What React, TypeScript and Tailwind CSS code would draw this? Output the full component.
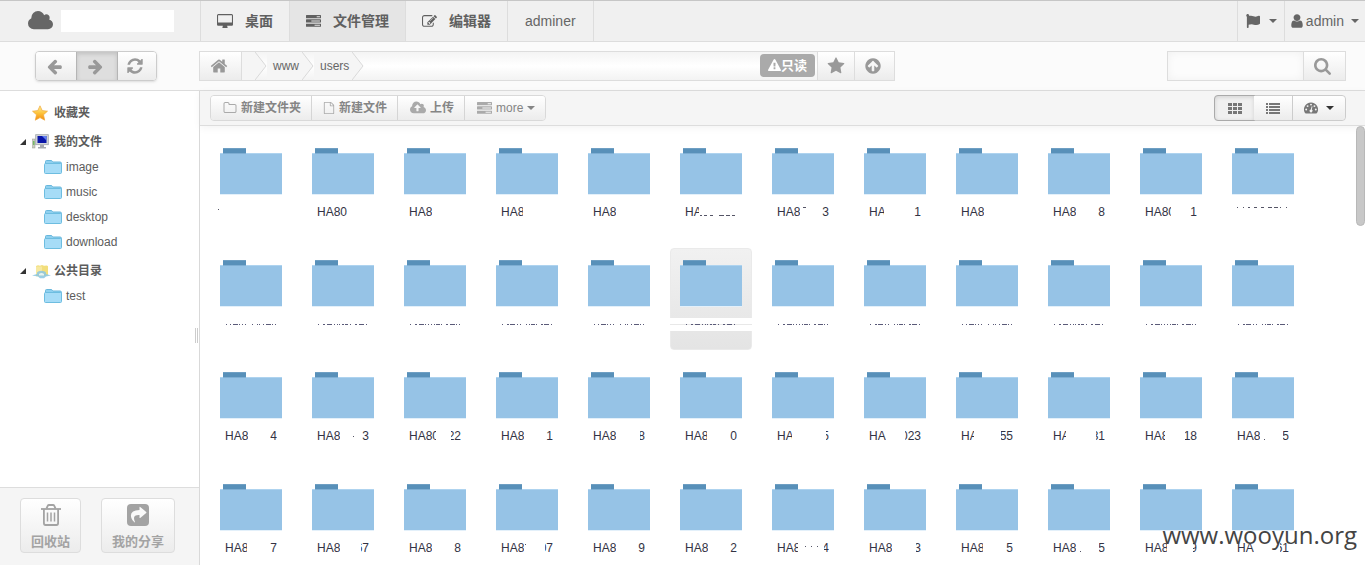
import React from "react";
import { FaFlag } from "react-icons/fa";

const ICONS = {
  left: "M1664 896v128q0 53-32.5 90.5t-84.5 37.5h-704l293 294q38 36 38 90t-38 90l-75 76q-37 37-90 37-52 0-91-37l-651-652q-37-37-37-90 0-52 37-91l651-650q38-38 91-38 52 0 90 38l75 74q38 38 38 91t-38 91l-293 293h704q52 0 84.5 37.5t32.5 90.5z",
  right: "M1600 960q0 54-37 91l-651 651q-39 37-91 37-51 0-90-37l-75-75q-38-38-38-91t38-91l293-293h-704q-52 0-84.5-37.5t-32.5-90.5v-128q0-53 32.5-90.5t84.5-37.5h704l-293-294q-38-36-38-90t38-90l75-75q38-38 90-38 53 0 91 38l651 651q37 35 37 90z",
  refresh: "M1639 1056q0 5-1 7-64 268-268 434.5t-478 166.5q-146 0-282.5-55t-243.5-157l-129 129q-19 19-45 19t-45-19-19-45v-448q0-26 19-45t45-19h448q26 0 45 19t19 45-19 45l-137 137q71 66 161 102t187 36q134 0 250-65t186-179q11-17 53-117 8-23 30-23h192q13 0 22.5 9.5t9.5 22.5zm25-800v448q0 26-19 45t-45 19h-448q-26 0-45-19t-19-45 19-45l138-138q-148-137-349-137-134 0-250 65t-186 179q-11 17-53 117-8 23-30 23h-199q-13 0-22.5-9.5t-9.5-22.5v-7q65-268 270-434.5t480-166.5q146 0 284 55.5t245 156.5l130-129q19-19 45-19t45 19 19 45z",
  home: "M1472 992v480q0 26-19 45t-45 19h-384v-384h-256v384h-384q-26 0-45-19t-19-45v-480q0-1 .5-3t.5-3l575-474 575 474q1 2 1 6zm223-69l-62 74q-8 9-21 11h-3q-13 0-21-7l-692-577-692 577q-12 8-24 7-13-2-21-11l-62-74q-8-10-7-23.5t11-21.5l719-599q32-26 76-26t76 26l244 204v-195q0-14 9-23t23-9h192q14 0 23 9t9 23v408l219 182q10 8 11 21.5t-7 23.5z",
  star: "M1728 647q0 22-26 48l-363 354 86 500q1 7 1 20 0 21-10.5 35.5t-30.5 14.5q-19 0-40-12l-449-236-449 236q-22 12-40 12-21 0-31.5-14.5t-10.5-35.5q0-6 2-20l86-500-364-354q-25-27-25-48 0-37 56-46l502-73 225-455q19-41 49-41t49 41l225 455 502 73q56 9 56 46z",
  search: "M1216 832q0-185-131.5-316.5t-316.5-131.5-316.5 131.5-131.5 316.5 131.5 316.5 316.5 131.5 316.5-131.5 131.5-316.5zm512 832q0 52-38 90t-90 38q-54 0-90-38l-343-342q-179 124-399 124-143 0-273.5-55.5t-225-150-150-225-55.5-273.5 55.5-273.5 150-225 225-150 273.5-55.5 273.5 55.5 225 150 150 225 55.5 273.5q0 220-124 399l343 343q37 37 37 90z",
  tasks: "M1024 1408h640v-128h-640v128zm-384-512h1024v-128h-1024v128zm640-512h384v-128h-384v128zm512 832v256q0 26-19 45t-45 19h-1664q-26 0-45-19t-19-45v-256q0-26 19-45t45-19h1664q26 0 45 19t19 45zm0-512v256q0 26-19 45t-45 19h-1664q-26 0-45-19t-19-45v-256q0-26 19-45t45-19h1664q26 0 45 19t19 45zm0-512v256q0 26-19 45t-45 19h-1664q-26 0-45-19t-19-45v-256q0-26 19-45t45-19h1664q26 0 45 19t19 45z",
  cloud: "M1984 1152q0 159-112.5 271.5t-271.5 112.5h-1088q-185 0-316.5-131.5t-131.5-316.5q0-132 71-241.5t187-163.5q-2-28-2-43 0-212 150-362t362-150q158 0 286.5 88t187.5 230q70-62 166-62 106 0 181 75t75 181q0 75-41 138 129 30 213 134.5t84 239.5z",
  upload: "M1280 864q0-14-9-23l-352-352q-9-9-23-9t-23 9l-351 351q-10 12-10 24 0 14 9 23t23 9h224v352q0 13 9.5 22.5t22.5 9.5h192q13 0 22.5-9.5t9.5-22.5v-352h224q13 0 22.5-9.5t9.5-22.5zm640 288q0 159-112.5 271.5t-271.5 112.5h-1088q-185 0-316.5-131.5t-131.5-316.5q0-130 70-240t188-165q-2-30-2-43 0-212 150-362t362-150q156 0 285.5 87t188.5 231q71-62 166-62 106 0 181 75t75 181q0 76-41 138 130 31 213.5 135.5t83.5 238.5z",
  user: "M1536 1399q0 109-62.5 187t-150.5 78h-854q-88 0-150.5-78t-62.5-187q0-85 8.5-160.5t31.5-152 58.5-131 94-89 134.5-34.5q131 128 313 128t313-128q76 0 134.5 34.5t94 89 58.5 131 31.5 152 8.5 160.5zm-256-887q0 159-112.5 271.5t-271.5 112.5-271.5-112.5-112.5-271.5 112.5-271.5 271.5-112.5 271.5 112.5 112.5 271.5z",
  edit: "M888 1184l116-116-152-152-116 116v56h96v96h56zm440-720q-16-16-33 1l-350 350q-17 17-1 33t33-1l350-350q17-17 1-33zm80 594v190q0 119-84.5 203.5t-203.5 84.5h-832q-119 0-203.5-84.5t-84.5-203.5v-832q0-119 84.5-203.5t203.5-84.5h832q63 0 117 25 15 7 18 23 3 17-9 29l-49 49q-14 14-32 8-23-6-45-6h-832q-66 0-113 47t-47 113v832q0 66 47 113t113 47h832q66 0 113-47t47-113v-126q0-13 9-22l64-64q15-15 35-7t20 29zm-96-738l288 288-672 672h-288v-288zm444 132l-92 92-288-288 92-92q28-28 68-28t68 28l152 152q28 28 28 68t-28 68z",
  up: "M1412 895q0-27-18-45l-362-362-91-91q-18-18-45-18t-45 18l-91 91-362 362q-18 18-18 45t18 45l91 91q18 18 45 18t45-18l189-189v502q0 26 19 45t45 19h128q26 0 45-19t19-45v-502l189 189q19 19 45 19t45-19l91-91q18-18 18-45zm252 1q0 209-103 385.5t-279.5 279.5-385.5 103-385.5-103-279.5-279.5-103-385.5 103-385.5 279.5-279.5 385.5-103 385.5 103 279.5 279.5 103 385.5z",
  folder: "M1600 1312v-704q0-40-28-68t-68-28h-704q-40 0-68-28t-28-68v-64q0-40-28-68t-68-28h-320q-40 0-68 28t-28 68v960q0 40 28 68t68 28h1216q40 0 68-28t28-68zm128-704v704q0 92-66 158t-158 66h-1216q-92 0-158-66t-66-158v-960q0-92 66-158t158-66h320q92 0 158 66t66 158v32h672q92 0 158 66t66 158z",
  file: "M1596 380q28 28 48 76t20 88v1152q0 40-28 68t-68 28h-1344q-40 0-68-28t-28-68v-1600q0-40 28-68t68-28h896q40 0 88 20t76 48zm-444-244v376h376q-10-29-22-41l-313-313q-12-12-41-22zm384 1528v-1024h-416q-40 0-68-28t-28-68v-416h-768v1536h1280z",
  desktop: "M1728 992v-832q0-13-9.5-22.5t-22.5-9.5h-1600q-13 0-22.5 9.5t-9.5 22.5v832q0 13 9.5 22.5t22.5 9.5h1600q13 0 22.5-9.5t9.5-22.5zm128-832v1088q0 66-47 113t-113 47h-544q0 37 16 77.5t32 71 16 43.5q0 26-19 45t-45 19h-512q-26 0-45-19t-19-45q0-14 16-44t32-70 16-78h-544q-66 0-113-47t-47-113v-1088q0-66 47-113t113-47h1600q66 0 113 47t47 113z",
  warning: "M1024 1375v-190q0-14-9.5-23.5t-22.5-9.5h-192q-13 0-22.5 9.5t-9.5 23.5v190q0 14 9.5 23.5t22.5 9.5h192q13 0 22.5-9.5t9.5-23.5zm-2-374l18-459q0-12-10-19-13-11-24-11h-220q-11 0-24 11-10 7-10 21l17 457q0 10 10 16.5t24 6.5h185q14 0 23.5-6.5t10.5-16.5zm-14-934l768 1408q35 63-2 126-17 29-46.5 46t-63.5 17h-1536q-34 0-63.5-17t-46.5-46q-37-63-2-126l768-1408q17-31 47-49t65-18 65 18 47 49z",
};

function Icon({ name, className, box = "0 0 1792 1792" }: { name: keyof typeof ICONS; className: string; box?: string }) {
  return (
    <svg viewBox={box} className={`shrink-0 ${className}`} fill="currentColor" aria-hidden="true">
      <path d={ICONS[name]} />
    </svg>
  );
}

const Caret = () => (
  <svg viewBox="0 0 8 4" className="h-1 w-2 shrink-0" fill="currentColor" aria-hidden="true">
    <path d="M0 0h8L4 4z" />
  </svg>
);

const BigFolder = () => (
  <svg viewBox="0 0 62 48" className="h-12 w-[62px]" aria-hidden="true">
    <rect x="3" y="0" width="23" height="6" fill="#5890b9" />
    <rect x="3" y="0" width="23" height="1" fill="#6f9fc3" />
    <rect x="0" y="5" width="62" height="41" fill="#96c3e6" />
    <rect x="0" y="5" width="62" height="1" fill="#aed3ef" />
    <rect x="3" y="5" width="23" height="1" fill="#7eaed3" />
    <rect x="0" y="46" width="62" height="1" fill="#e3f0fa" />
  </svg>
);

const SmallFolder = () => (
  <svg viewBox="0 0 18 14" className="h-3.5 w-[18px] shrink-0" aria-hidden="true">
    <path d="M1.5 5V1.500q0-1 1-1h4.500q1 0 1.500 1l.5.500h7q1.500 0 1.500 1.500v2" fill="#8fd0ef" stroke="#68b7dc" />
    <rect x=".5" y="3.500" width="17" height="10" rx="1" fill="#a6dcf7" stroke="#6dbde0" />
  </svg>
);

const StarIcon = () => (
  <svg viewBox="0 0 16 16" className="h-4 w-4 shrink-0" aria-hidden="true">
    <defs>
      <linearGradient id="gold" x2="0" y2="1">
        <stop offset="0" stopColor="#fff0a0" />
        <stop offset=".5" stopColor="#fdc43c" />
        <stop offset="1" stopColor="#f58a0c" />
      </linearGradient>
    </defs>
    <path d="M8 .8l2.200 4.800 5.300.6-4 3.600 1.200 5.400L8 12.600l-4.700 2.600 1.200-5.400-4-3.600 5.300-.6z" fill="url(#gold)" stroke="#efa83a" strokeWidth=".7" strokeLinejoin="round" />
  </svg>
);

const ComputerIcon = () => (
  <svg viewBox="0 0 17 16" className="h-4 w-[17px] shrink-0" aria-hidden="true">
    <rect x=".5" y="5" width="2.500" height="9" fill="#c9ccc0" stroke="#9a9d92" strokeWidth=".5" />
    <rect x="1.200" y="7" width="1.200" height="4" fill="#64b650" />
    <rect x="3.700" y=".7" width="12.600" height="10" fill="#d3d6db" stroke="#9fa3ab" strokeWidth=".8" />
    <rect x="5.500" y="2" width="9" height="7" fill="#0a16a8" />
    <path d="M10 2h4.500v4.500z" fill="#5f7df0" />
    <path d="M8 11h4v2h2v1.500H6V13h2z" fill="#a6a9af" />
  </svg>
);

const PublicIcon = () => (
  <svg viewBox="0 0 19 16" className="h-4 w-[19px] shrink-0" aria-hidden="true">
    <path d="M4 3l2-.8 2 .6 2-.8 2 .8 3-.3 1 .7v9l-3 1H4z" fill="#f2de7c" />
    <path d="M4 3.500h6v8H4z" fill="#f7e9a0" />
    <path d="M0 12.500l5-1.500V9.500q1-1.800 4.500-1.800T14 9.500V11l5 1.500-5 1-2 1.800H8l-2-1.800z" fill="#8ac5e3" opacity=".85" />
    <path d="M7 12.500V11q2.500-2 5 0v1.500z" fill="#e6f3ef" />
  </svg>
);

const GridIcon = () => (
  <svg viewBox="0 0 14 11" className="h-[11px] w-3.5" fill="currentColor" aria-hidden="true">
    {[0, 4, 8].flatMap((y) => [0, 5, 10].map((x) => <rect key={`${x}-${y}`} x={x} y={y} width="4" height="3" />))}
  </svg>
);

const ListIcon = () => (
  <svg viewBox="0 0 14 11" className="h-[11px] w-3.5" fill="currentColor" aria-hidden="true">
    {[0, 3, 6, 9].map((y) => (
      <g key={y}>
        <rect x="0" y={y} width="2" height="2" />
        <rect x="3" y={y} width="11" height="2" />
      </g>
    ))}
  </svg>
);

const GaugeIcon = () => (
  <svg viewBox="0 0 14 12" className="h-3 w-3.5" aria-hidden="true">
    <path d="M7 .5a7 7 0 0 1 6 10.600q-.3.400-.8.400H1.800q-.5 0-.8-.4A7 7 0 0 1 7 .5z" fill="currentColor" />
    <g fill="#f4f4f4">
      <circle cx="7" cy="2.600" r=".95" />
      <circle cx="3.600" cy="4.100" r=".95" />
      <circle cx="10.400" cy="4.100" r=".95" />
      <circle cx="2.200" cy="7.500" r=".95" />
      <circle cx="11.800" cy="7.500" r=".95" />
      <path d="M7.700 4.200l.8.200-.7 3.200a1.500 1.500 0 1 1-1-.2z" />
    </g>
  </svg>
);

const TrashIcon = () => (
  <svg viewBox="0 0 20 22" className="h-[22px] w-5" fill="none" stroke="currentColor" aria-hidden="true">
    <path d="M0 5h20" strokeWidth="1.800" />
    <path d="M5.500 4.500l1.200-2.600q.4-.9 1.300-.9h4q.9 0 1.300.9l1.200 2.600M2.900 5v14q0 2 1.600 2h11q1.600 0 1.600-2V5" strokeWidth="1.800" />
    <path d="M6.500 8.500v9M10 8.500v9M13.500 8.500v9" strokeWidth="1.500" />
  </svg>
);

const ShareIcon = () => (
  <svg viewBox="0 0 22 22" className="h-[22px] w-[22px]" aria-hidden="true">
    <rect width="22" height="22" rx="4" fill="currentColor" />
    <path d="M12.500 3.200q0-.8.7-.3l6 5q.5.500 0 1l-6 5q-.7.500-.7-.3v-2.700q-5.500-.2-5.500 3 0 1.800 1 4 .1.800-.5.300-3.600-3-3.600-6.700 0-5.500 8.600-5.600z" fill="#fafafa" />
  </svg>
);

type Mark = { x: number; y: number; w: number };
type Folder = { l?: string; lw?: number; r?: string; rw?: number; marks?: Mark[]; slit?: string; selected?: boolean };

const slits = [
  "1 3 1 2 5 1 1 2 1 2 1 6 1 4 1 1",
  "1 4 2 2 5 2 1 2 1 1 1 2 2 1 3 2",
  "1 4 2 2 5 1 1 2 1 2 1 2 1 1 4 1",
  "1 4 2 1 5 2 1 2 1 5 1 2 1 1 4 1",
];

const folders: Folder[] = [
  { marks: [{ x: -7, y: 5, w: 1 }] },
  { l: "HA80", lw: 31 }, { l: "HA8" }, { l: "HA8", lw: 22 }, { l: "HA8" },
  { l: "HA", lw: 14, marks: [{ x: 15, y: 11, w: 2 }, { x: 19, y: 11, w: 3 }, { x: 25, y: 11, w: 3 }, { x: 34, y: 11, w: 5 }, { x: 41, y: 11, w: 4 }, { x: 47, y: 11, w: 3 }] },
  { l: "HA8", r: "3", marks: [{ x: 26, y: 3, w: 3 }] },
  { l: "HA", lw: 15, r: "1" }, { l: "HA8" }, { l: "HA8", r: "8" }, { l: "HA80", lw: 26, r: "1" },
  { marks: [{ x: 0, y: 3, w: 1 }, { x: 6, y: 3, w: 1 }, { x: 11, y: 3, w: 2 }, { x: 17, y: 3, w: 3 }, { x: 24, y: 3, w: 3 }, { x: 31, y: 3, w: 4 }, { x: 37, y: 3, w: 4 }, { x: 43, y: 3, w: 1 }, { x: 49, y: 3, w: 1 }] },
  ...Array.from({ length: 12 }, (_, i) => ({ slit: slits[i % 4], selected: i === 5 })),
  { l: "HA8", r: "4" }, { l: "HA8", r: "3", marks: [{ x: 36, y: 8, w: 1 }] }, { l: "HA80", lw: 27, r: "22", rw: 10 },
  { l: "HA8", r: "1" }, { l: "HA8", r: "8", rw: 5 }, { l: "HA8", lw: 22, r: "0" }, { l: "HA", lw: 15, r: "5", rw: 3 },
  { l: "HA", r: "023", rw: 16 }, { l: "HA", lw: 13, r: "55", rw: 12 }, { l: "HA", lw: 13, r: "31", rw: 9 },
  { l: "HA8", lw: 20, r: "18", rw: 12 }, { l: "HA8", r: "5", rw: 6, marks: [{ x: 27, y: 11, w: 1 }] },
  { l: "HA8", lw: 22, r: "7" }, { l: "HA8", r: "67", rw: 8 }, { l: "HA8", r: "8" },
  { l: "HA8", r: "07", rw: 8, marks: [{ x: 24, y: 4, w: 1 }] }, { l: "HA8", r: "9" }, { l: "HA8", lw: 23, r: "2" },
  { l: "HA8", lw: 21, r: "4", rw: 5, marks: [{ x: 28, y: 6, w: 1 }, { x: 34, y: 6, w: 1 }, { x: 40, y: 6, w: 1 }] },
  { l: "HA8", r: "3", rw: 5 }, { l: "HA8", lw: 22, r: "5" }, { l: "HA8", r: "5", rw: 6, marks: [{ x: 27, y: 11, w: 1 }] },
  { l: "HA8", lw: 22, r: "9", rw: 4 }, { l: "HA", r: "61", rw: 9 },
];

function FolderCell({ f }: { f: Folder }) {
  return (
    <li className={`flex h-[102px] w-[82px] flex-col items-center rounded-sm pt-3 ${f.selected ? "border border-[#eaeaea] bg-linear-to-b from-[#f1f1f1] to-[#e4e4e4] pt-[11px]" : ""}`}>
      <BigFolder />
      {f.slit ? (
        <div className={`mt-2.5 flex h-[13px] items-center justify-center self-stretch bg-white ${f.selected ? "-mx-px" : ""}`}>
          <svg viewBox="0 0 82 1" className="h-px w-[82px]" aria-hidden="true">
            {f.selected && <rect width="82" height="1" fill="#e8e8e8" />}
            <path d="M16 .5h50" stroke="#5a5a78" strokeDasharray={f.slit} />
          </svg>
        </div>
      ) : (
        <div className="relative mt-2 flex h-4 w-[52px] justify-between text-xs leading-4 text-[#333344]">
          <span className="overflow-hidden" style={{ width: f.lw }}>{f.l}</span>
          <span className="flex justify-end overflow-hidden" style={{ width: f.rw }}>{f.r}</span>
          {f.marks && (
            <svg viewBox="0 0 52 16" className="absolute inset-0 h-4 w-[52px] overflow-visible" fill="#555566" aria-hidden="true">
              {f.marks.map((m) => <rect key={m.x} x={m.x} y={m.y} width={m.w} height="1" />)}
            </svg>
          )}
        </div>
      )}
    </li>
  );
}

function Crumb({ children, pad }: { children?: React.ReactNode; pad: string }) {
  return (
    <li className="flex items-stretch text-xs text-[#666]">
      {children ? <a href="#" className={`flex items-center bg-[#f5f5f5] ${pad}`}>{children}</a> : <span className={`bg-[#f5f5f5] ${pad}`} />}
      <svg viewBox="0 0 12 28" className="h-7 w-3" aria-hidden="true">
        <path d="M0 0L11 14L0 28" fill="#f5f5f5" stroke="#d9d9d9" />
      </svg>
    </li>
  );
}

function TreeGroup({ icon, label, items, open }: { icon: React.ReactNode; label: string; items: string[]; open?: boolean }) {
  return (
    <li className="mt-1">
      <a href="#" className="flex h-[25px] items-center pl-5 text-xs font-bold text-[#5c5c5c]">
        <span className="flex w-3 shrink-0">
          {open && (
            <svg viewBox="0 0 6 6" className="h-1.5 w-1.5" aria-hidden="true"><path d="M6 0v6H0z" fill="#333" /></svg>
          )}
        </span>
        <span className="flex w-[22px] shrink-0">{icon}</span>
        {label}
      </a>
      <ul>
        {items.map((t) => (
          <li key={t}>
            <a href="#" className="flex h-[25px] items-center gap-1 pl-11 text-xs text-[#5c5c5c]"><SmallFolder />{t}</a>
          </li>
        ))}
      </ul>
    </li>
  );
}

const raised = "bg-linear-to-b from-white to-[#ececec]";
const tab = "flex items-center gap-3 border-r border-[#ddd] text-sm";

export default function App() {
  return (
    <div className="relative flex h-screen flex-col overflow-hidden bg-white font-['Liberation_Sans','Noto_Sans_CJK_SC',sans-serif] text-[#666]">
      <header className="flex h-[42px] shrink-0 border-t border-b border-t-[#c6c6c6] border-b-[#ddd] bg-[#f0f0f0]">
        <div className="flex w-[200px] shrink-0 items-center gap-2 pl-7">
          <Icon name="cloud" box="64 128 1920 1536" className="h-5 w-[25px]" />
          <span className="h-[22px] w-[113px] bg-white" />
        </div>
        <nav className="flex border-l border-[#ddd] font-bold text-[#606060]">
          <a href="#" className={`${tab} px-4`}><Icon name="desktop" box="-64 0 1920 1664" className="h-3.5 w-4" />桌面</a>
          <a href="#" className={`${tab} bg-[#e5e5e5] px-4`}><Icon name="tasks" className="h-[15px] w-[15px]" />文件管理</a>
          <a href="#" className={`${tab} px-4`}><Icon name="edit" className="h-[15px] w-[15px]" />编辑器</a>
          <a href="#" className={`${tab} px-[17px] font-normal text-[#666]`}>adminer</a>
        </nav>
        <div className="ml-auto flex text-sm">
          <button aria-label="Language" className="flex items-center gap-2 border-l border-[#ddd] px-[7px]"><FaFlag className="h-3.5 w-4" /><Caret /></button>
          <button className="flex items-center gap-[3px] border-l border-[#ddd] px-1.5">
            <Icon name="user" box="256 0 1280 1792" className="h-4 w-3" />admin<span className="ml-1"><Caret /></span>
          </button>
        </div>
      </header>

      <div className="flex h-[49px] shrink-0 items-center border-b border-[#ddd] bg-[#fbfbfb] text-[#999]">
        <div className="w-[199px] shrink-0 pl-[35px]">
          <div className="flex h-[30px] w-[122px] overflow-hidden rounded-sm border border-[#ccc] shadow-sm">
            <button aria-label="Back" className={`flex w-10 items-center justify-center pr-1 ${raised}`}><Icon name="left" className="h-[17px] w-[17px]" /></button>
            <button aria-label="Forward" className="flex w-[42px] items-center justify-center border-x border-[#b5b5b5] bg-[#dedede] pr-1 shadow-[inset_0_2px_4px_#0002]"><Icon name="right" className="h-[17px] w-[17px]" /></button>
            <button aria-label="Refresh" className={`flex flex-1 items-center justify-center pr-1 ${raised}`}><Icon name="refresh" className="h-[18px] w-[18px]" /></button>
          </div>
        </div>
        <div className="flex h-[30px] w-[696px] border border-[#ddd] bg-[#fcfcfc] bg-linear-to-b from-[#f4f4f4] via-white to-[#f3f3f3]">
          <button aria-label="Home" className={`flex w-[42px] items-center justify-center border-r border-[#ddd] pr-1 ${raised}`}><Icon name="home" className="h-[18px] w-[18px]" /></button>
          <ol className="flex">
            <Crumb pad="w-[13px]" />
            <Crumb pad="pr-[3px] pl-1.5">www</Crumb>
            <Crumb pad="pr-[3px] pl-1.5">users</Crumb>
          </ol>
          <span className="mt-0.5 mr-0.5 ml-auto flex h-[23px] items-center rounded-sm bg-[#aaa] px-2 text-[13px] font-bold text-white"><Icon name="warning" className="h-[13px] w-[13px]" />只读</span>
          <button aria-label="Favourite" className={`flex w-[37px] items-center justify-center border-l border-[#ddd] ${raised}`}><Icon name="star" className="h-[18px] w-[18px]" /></button>
          <button aria-label="Up" className={`flex w-10 items-center justify-center border-l border-[#ddd] pr-1 ${raised}`}><Icon name="up" className="h-[18px] w-[18px]" /></button>
        </div>
        <div className="mr-[19px] ml-auto flex h-[30px] border border-[#ddd]">
          <input aria-label="Search" className="w-[135px] bg-[#fcfcfc] px-2 text-xs shadow-[inset_0_0_8px_#0000000d] outline-none" />
          <button aria-label="Find" className={`flex w-[42px] items-center justify-center border-l border-[#ddd] pr-1 ${raised}`}><Icon name="search" box="64 128 1664 1664" className="h-[17px] w-[17px]" /></button>
        </div>
      </div>

      <div className="flex min-h-0 flex-1">
        <aside className="relative flex w-[200px] shrink-0 flex-col border-r border-[#d9d9d9]">
          <ul className="flex-1 pt-[5px]">
            <TreeGroup icon={<StarIcon />} label="收藏夹" items={[]} />
            <TreeGroup icon={<ComputerIcon />} label="我的文件" items={["image", "music", "desktop", "download"]} open />
            <TreeGroup icon={<PublicIcon />} label="公共目录" items={["test"]} open />
          </ul>
          <span className="absolute top-1/2 right-px h-[15px] w-[3px] border-x border-[#ccc]" />
          <div className="flex h-[78px] gap-5 border-t border-[#ddd] bg-[#f5f5f5] px-5 pt-2.5 text-[13px] font-bold text-[#a3a3a3]">
            <button className={`flex h-[55px] w-[61px] flex-col items-center justify-between rounded-sm border border-[#ddd] pt-[5px] leading-5 ${raised}`}><TrashIcon />回收站</button>
            <button className={`flex h-[55px] w-[74px] flex-col items-center justify-between rounded-sm border border-[#ddd] pt-[5px] leading-5 ${raised}`}><ShareIcon />我的分享</button>
          </div>
        </aside>

        <main className="flex min-w-0 flex-1 flex-col">
          <div className="flex h-[35px] shrink-0 items-center justify-between border-b border-[#ddd] bg-[#f5f5f5] pr-[19px] pl-2.5 text-xs shadow-[0_2px_8px_#0000000d]">
            <div className="flex h-[26px] divide-x divide-[#d5d5d5] overflow-hidden rounded-sm border border-[#d9d9d9] font-bold text-[#858585]">
              <button className={`flex items-center gap-1 pr-2.5 pl-3 ${raised}`}><Icon name="folder" className="h-3.5 w-3.5 text-[#aaa]" />新建文件夹</button>
              <button className={`flex items-center gap-1 pr-2.5 pl-[11px] ${raised}`}><Icon name="file" className="h-3 w-3 text-[#aaa]" />新建文件</button>
              <button className={`flex items-center gap-1 pr-2.5 pl-3 ${raised}`}><Icon name="upload" box="0 0 1920 1792" className="h-4 w-4 text-[#aaa]" />上传</button>
              <button className={`flex items-center gap-1 pr-2.5 pl-3 font-normal ${raised}`}><Icon name="tasks" className="h-[15px] w-[15px] text-[#aaa]" />more<Caret /></button>
            </div>
            <div className="flex h-[26px] w-[132px] rounded-sm border border-[#ccc] text-[#777]">
              <button aria-label="Icon view" className="-m-px flex w-[41px] items-center justify-center rounded-l-sm border border-[#aaa] bg-[#f0f0f0] shadow-[inset_0_1px_4px_#0002]"><GridIcon /></button>
              <button aria-label="List view" className={`flex w-[39px] items-center justify-center border-r border-[#ccc] ${raised}`}><ListIcon /></button>
              <button aria-label="Theme" className={`flex flex-1 items-center justify-center gap-2 rounded-r-sm ${raised}`}><GaugeIcon /><span className="text-[#333]"><Caret /></span></button>
            </div>
          </div>
          <div className="flex min-h-0 flex-1">
            <ul className="grid flex-1 grid-cols-[repeat(auto-fill,82px)] content-start gap-2.5 overflow-hidden pt-2.5 pl-2.5">
              {folders.map((f, i) => <FolderCell key={i} f={f} />)}
            </ul>
            <div className="w-[9px] shrink-0"><div className="h-[100px] rounded-full border border-[#b8b8b8] bg-[#c8c8c8]" /></div>
          </div>
        </main>
      </div>
      <span className="absolute right-2 bottom-3 font-['Open_Sans',sans-serif] text-2xl leading-9 text-[#444]">www.wooyun.org</span>
    </div>
  );
}
